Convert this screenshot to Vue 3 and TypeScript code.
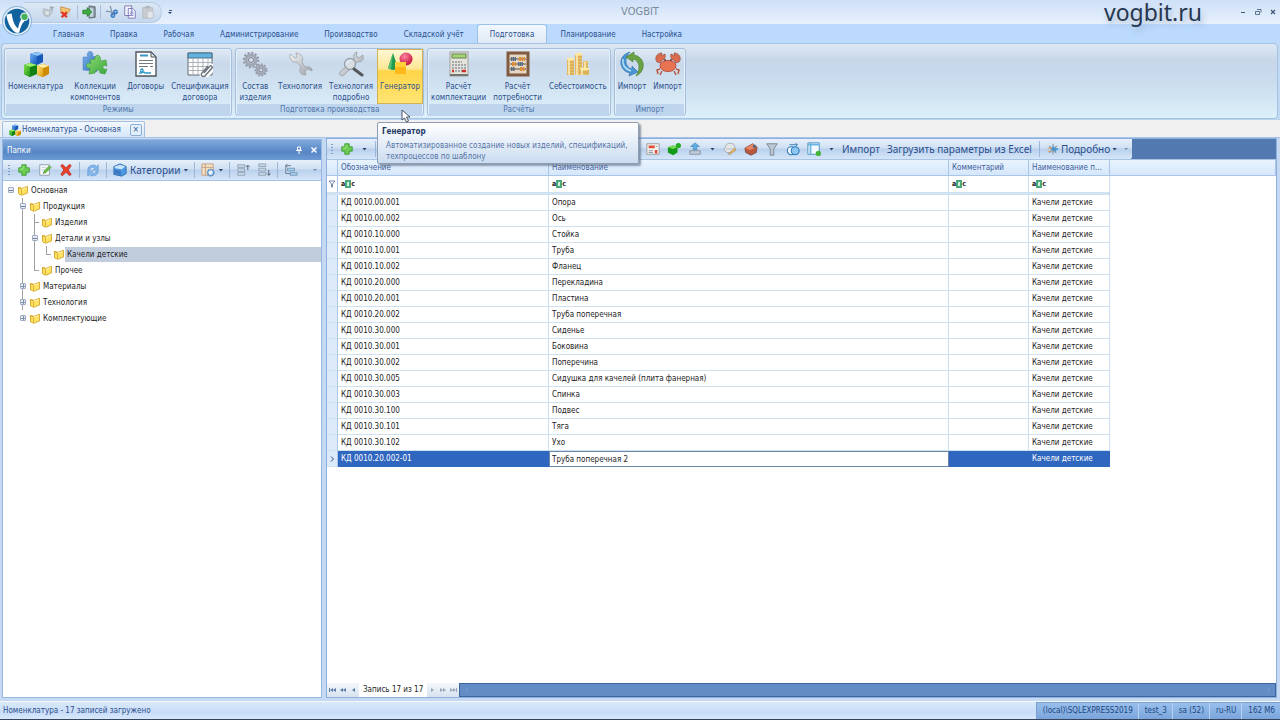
<script setup lang="ts">
import { ref } from 'vue'

interface RibbonItem { icon: string; lines: string[]; active?: boolean }
interface RibbonGroup { title: string; items: RibbonItem[] }
interface TreeRow { label: string; guides: string[]; selected?: boolean }

const menu = ['Главная', 'Правка', 'Рабочая', 'Администрирование', 'Производство', 'Складской учёт', 'Подготовка', 'Планирование', 'Настройка']
const activeMenu = ref('Подготовка')

const quick = ['q-redo', 'q-flag', '|', 'q-exit', '|', 'q-cut', 'q-copy', 'q-paste']

const groups: RibbonGroup[] = [
  {
    title: 'Режимы',
    items: [
      { icon: 'cubes', lines: ['Номенклатура'] },
      { icon: 'puzzle', lines: ['Коллекции', 'компонентов'] },
      { icon: 'contract', lines: ['Договоры'] },
      { icon: 'spec', lines: ['Спецификация', 'договора'] },
    ],
  },
  {
    title: 'Подготовка производства',
    items: [
      { icon: 'gears', lines: ['Состав', 'изделия'] },
      { icon: 'wrench', lines: ['Технология'] },
      { icon: 'tools', lines: ['Технология', 'подробно'] },
      { icon: 'shapes', lines: ['Генератор'], active: true },
    ],
  },
  {
    title: 'Расчёты',
    items: [
      { icon: 'calc', lines: ['Расчёт', 'комплектации'] },
      { icon: 'abacus', lines: ['Расчёт', 'потребности'] },
      { icon: 'coins', lines: ['Себестоимость'] },
    ],
  },
  {
    title: 'Импорт',
    items: [
      { icon: 'sync', lines: ['Импорт'] },
      { icon: 'crab', lines: ['Импорт'] },
    ],
  },
]

const tree: TreeRow[] = [
  { label: 'Основная', guides: ['minus root'] },
  { label: 'Продукция', guides: ['none', 'minus line'] },
  { label: 'Изделия', guides: ['none', 'pipe', 'tee'] },
  { label: 'Детали и узлы', guides: ['none', 'pipe', 'minus line'] },
  { label: 'Качели детские', guides: ['none', 'pipe', 'pipe', 'elbow'], selected: true },
  { label: 'Прочее', guides: ['none', 'pipe', 'elbow'] },
  { label: 'Материалы', guides: ['none', 'plus line'] },
  { label: 'Технология', guides: ['none', 'plus line'] },
  { label: 'Комплектующие', guides: ['none', 'plus root'] },
]

const rows: [string, string][] = [
  ['КД 0010.00.001', 'Опора'],
  ['КД 0010.00.002', 'Ось'],
  ['КД 0010.10.000', 'Стойка'],
  ['КД 0010.10.001', 'Труба'],
  ['КД 0010.10.002', 'Фланец'],
  ['КД 0010.20.000', 'Перекладина'],
  ['КД 0010.20.001', 'Пластина'],
  ['КД 0010.20.002', 'Труба поперечная'],
  ['КД 0010.30.000', 'Сиденье'],
  ['КД 0010.30.001', 'Боковина'],
  ['КД 0010.30.002', 'Поперечина'],
  ['КД 0010.30.005', 'Сидушка для качелей (плита фанерная)'],
  ['КД 0010.30.003', 'Спинка'],
  ['КД 0010.30.100', 'Подвес'],
  ['КД 0010.30.101', 'Тяга'],
  ['КД 0010.30.102', 'Ухо'],
]
const edited = ref('Труба поперечная 2')
const headers = ['Обозначение', 'Наименование', 'Комментарий', 'Наименование п...']
const status = ['(local)\\SQLEXPRESS2019', 'test_3', 'sa (52)', 'ru-RU', '162 Мб']
</script>

<template>
  <div class="app">
    <svg class="defs" aria-hidden="true">
      <defs>
        <linearGradient id="gBlue" x1="0" y1="0" x2="1" y2="1"><stop offset="0" stop-color="#6db0f5" /><stop offset="1" stop-color="#1453b8" /></linearGradient>
        <linearGradient id="gPuz" x1="0" y1="0" x2="1" y2="1"><stop offset="0" stop-color="#7fb4ea" /><stop offset="1" stop-color="#2f6dbf" /></linearGradient>
        <linearGradient id="gGreen" x1="0" y1="0" x2="1" y2="1"><stop offset="0" stop-color="#7ae04c" /><stop offset="1" stop-color="#1d9416" /></linearGradient>
        <linearGradient id="gLeaf" x1="0" y1="0" x2="1" y2="1"><stop offset="0" stop-color="#8fdc78" /><stop offset="1" stop-color="#3ba53a" /></linearGradient>
        <linearGradient id="gGold" x1="0" y1="0" x2="1" y2="1"><stop offset="0" stop-color="#ffe27a" /><stop offset="1" stop-color="#dd9c08" /></linearGradient>
        <linearGradient id="gGray" x1="0" y1="0" x2="1" y2="1"><stop offset="0" stop-color="#f4f5f6" /><stop offset="1" stop-color="#9aa0a8" /></linearGradient>
        <radialGradient id="gRed" cx="0.4" cy="0.3" r="0.7"><stop offset="0" stop-color="#ff86a0" /><stop offset="1" stop-color="#c5123f" /></radialGradient>

        <symbol id="cubes" viewBox="0 0 26 26">
          <path d="M7 3l7-2 6 2v8l-6 3-7-2z" fill="#1757b5" /><path d="M7 3l7-2 6 2-6 2z" fill="#8cc4fa" /><path d="M7 3l7 2v9l-7-2z" fill="url(#gBlue)" />
          <path d="M1 14l6-2 7 2v9l-7 3-6-3z" fill="#128012" /><path d="M1 14l6-2 7 2-7 2z" fill="#9df06c" /><path d="M1 14l6 2v10l-6-3z" fill="url(#gGreen)" />
          <path d="M14 15l6-2 6 2v8l-6 3-6-2z" fill="#cf8b02" /><path d="M14 15l6-2 6 2-6 2z" fill="#fff0a0" /><path d="M14 15l6 2v9l-6-2z" fill="url(#gGold)" />
        </symbol>
        <symbol id="puzzle" viewBox="0 0 26 26">
          <path d="M1 6l5 0c-2-3 0-5.500 2-5.500s4 2 2.500 5l4.500 0v15L1 19z" fill="url(#gPuz)" stroke="#4a7fc4" stroke-width=".5" />
          <path d="M8 9l5-1c-1-4 4-5 5-2 1 2 0 3 1 4l5-1 1 6c-3-1-5 0-4 2s3 1 4 1l-2 5-5-1c0-4-5-4-5 0l-6 1 1-6c-3 1-5-3-2-5 1 0 2 0 3 1z" fill="url(#gLeaf)" stroke="#3c9c35" stroke-width=".6" />
        </symbol>
        <symbol id="contract" viewBox="0 0 26 26">
          <path d="M3 1h15l5 5v19H3z" fill="#fff" stroke="#4f565d" stroke-width="1.4" /><path d="M18 1v5h5z" fill="#d5dce3" stroke="#4f565d" />
          <path d="M7 4.500h8" stroke="#3993c8" stroke-width="2" /><path d="M6 9.500h14M6 12.500h14M6 15.500h9M17 15.500h3" stroke="#737a80" stroke-width="1" />
          <path d="M6 22c4 1 5-4 3-4s-2 5 2 3l1 1h6" stroke="#2998c7" stroke-width="1.300" fill="none" />
        </symbol>
        <symbol id="spec" viewBox="0 0 26 26">
          <path d="M1 2h24v22H1z" fill="#fff" stroke="#5f6870" /><path d="M1 2h24v5H1z" fill="#62b3df" stroke="#4c7184" /><path d="M1 11.500h24M1 15.500h24M1 19.500h24M6 7v17M11 7v17M16 7v17M21 7v17" stroke="#aab2b8" />
          <path d="M16 24l8-9c2-2 5 1 3 3l-8 8c-3 3-6-1-4-3l8-8" fill="none" stroke="#fff" stroke-width="3" /><path d="M17 22l6-7c1-1 3 1 2 2l-7 8c-2 2-5-1-3-3l6-7" fill="none" stroke="#697078" stroke-width="1.300" />
        </symbol>
        <symbol id="gears" viewBox="0 0 26 26">
          <circle cx="9" cy="9" r="7" fill="none" stroke="#9297a6" stroke-width="2.500" stroke-dasharray="2 1.670" /><circle cx="9" cy="9" r="5" fill="#c6cad4" stroke="#a1a6b4" stroke-width="3" /><circle cx="9" cy="9" r="2.500" fill="#d7e0ea" stroke="#7c8291" />
          <circle cx="19" cy="19" r="5.500" fill="none" stroke="#9297a6" stroke-width="2" stroke-dasharray="1.800 1.340" /><circle cx="19" cy="19" r="4" fill="#c6cad4" stroke="#a1a6b4" stroke-width="2.500" /><circle cx="19" cy="19" r="2" fill="#d7e0ea" stroke="#7c8291" />
        </symbol>
        <symbol id="wrench" viewBox="0 0 26 26">
          <path d="M3 3l5 4 2-1-1-4c6 1 8 5 6 9l3 5c4-1 8 1 7 4l-4-2-3 2 1 4c-6 0-8-4-5-8l-4-5C5 12 2 8 3 3z" fill="url(#gGray)" stroke="#999da3" stroke-width=".7" />
        </symbol>
        <symbol id="tools" viewBox="0 0 26 26">
          <path d="M19 1l-1 4 3 2 4-3c1 5-1 7-6 7L7 23c-3 4-8 0-4-3L16 9c-1-5 0-7 3-8z" fill="url(#gGray)" stroke="#8f9499" stroke-width=".7" />
          <circle cx="12" cy="13" r="5.500" fill="#e9eff4" fill-opacity=".6" stroke="#969ca2" stroke-width="1.300" /><path d="M16 18l8 6" stroke="#55595e" stroke-width="3" stroke-linecap="round" />
        </symbol>
        <symbol id="shapes" viewBox="0 0 26 26">
          <path d="M6 2l5 15c-3 3-8 2-10 0z" fill="#229a4f" /><path d="M6 2L4 18l-3-1z" fill="#57c176" /><circle cx="19" cy="8" r="6.500" fill="url(#gRed)" /><path d="M8 11h11v12H8z" fill="#ffb81a" /><path d="M8 11h11v5H8z" fill="#ffd03a" />
        </symbol>
        <symbol id="calc" viewBox="0 0 26 26">
          <rect x="4" y="1" width="18" height="24" fill="#e5e4dc" stroke="#a0a19b" /><rect x="6" y="3" width="14" height="4" fill="#a5d373" stroke="#668457" /><path d="M4 24h18" stroke="#74776f" stroke-width="2" />
          <path d="M6 11h10M6 14h14M6 17h14M6 20h14" stroke="#8c9499" stroke-width="1.700" stroke-dasharray="2 1" /><path d="M16 20h4M6 20h2" stroke="#cf2c2c" stroke-width="2.500" />
        </symbol>
        <symbol id="abacus" viewBox="0 0 26 26">
          <rect x="3" y="2" width="20" height="22" fill="#e6d7c3" stroke="#805a41" stroke-width="3" /><path d="M5 8h16M5 13h16M5 18h16" stroke="#5b4b42" />
          <path d="M6 8h5M13 13h5M6 18h4" stroke="#526984" stroke-width="4" stroke-dasharray="1.500 .5" /><path d="M14 8h6M7 13h4M15 18h5" stroke="#df8e36" stroke-width="4" stroke-dasharray="2 .5" />
        </symbol>
        <symbol id="coins" viewBox="0 0 26 26">
          <path d="M2 8h7v16H2zM10 3h7v21h-7zM18 10h5v8h-5zM15 18h9v6h-9z" fill="#e9c36c" /><path d="M2 11h7M2 14h7M2 17h7M2 20h7M2 23h7M10 6h7M10 9h7M10 12h7M10 15h7M10 18h5M10 21h5M18 13h5M18 16h5M15 20h9M15 22h9" stroke="#c7953f" stroke-width=".8" />
          <path d="M4 9v15M12 4v20M17 19v5M20 11v6" stroke="#ffeebb" stroke-width="1.500" /><ellipse cx="5.500" cy="8" rx="3.500" ry="1.500" fill="#ffe9a6" /><ellipse cx="13.500" cy="3" rx="3.500" ry="1.500" fill="#ffe9a6" /><ellipse cx="19.500" cy="18" rx="4.500" ry="1.500" fill="#ffe9a6" />
        </symbol>
        <symbol id="sync" viewBox="0 0 26 26">
          <path d="M11 1C4 3 1 8 2 13c1 5 4 8 9 9l-1 3 9-4-6-6v3c-4-1-6-4-6-8 0-3 1-6 4-9z" fill="#4a94d2" stroke="#2b6ba8" stroke-width=".6" /><path d="M4 8C3 14 6 18 12 20" stroke="#b5e2f8" stroke-width="1.500" fill="none" />
          <path d="M17 25c6-3 8-8 7-13-1-4-4-7-9-8V1L7 6l7 5V8c4 1 6 4 6 8 0 3-1 6-3 9z" fill="#69a346" stroke="#3f7928" stroke-width=".6" />
        </symbol>
        <symbol id="crab" viewBox="0 0 26 26">
          <path d="M6 12L2 11c-3-4 0-9 5-9L6 5l4-2c1 4-1 6-4 7zM20 12l4-1c3-4 0-9-5-9l1 3-4-2c-1 4 1 6 4 7z" fill="#dd6b4e" stroke="#9e5647" stroke-width=".8" /><path d="M5 18l-3 1 1 4M7 20l-2 4M21 18l3 1-1 4M19 20l2 4" fill="none" stroke="#b85641" stroke-width="1.500" />
          <ellipse cx="13" cy="15" rx="8" ry="5.500" fill="#e77353" stroke="#b95340" /><circle cx="10" cy="9" r="1" fill="#673b36" /><circle cx="16" cy="9" r="1" fill="#673b36" />
        </symbol>
        <symbol id="logo" viewBox="0 0 28 28">
          <circle cx="14" cy="14" r="13.500" fill="#e5f0fa" stroke="#8eb4d8" /><circle cx="14" cy="14" r="11.500" fill="#1163a0" />
          <path d="M4 8l5-1c1 7 3 12 6 14 1-5 2-8 4-9l2 2c-3 3-4 7-5 11h-3C8 22 5 15 4 8z" fill="#fff" /><circle cx="21" cy="10" r="4" fill="#fff" /><circle cx="21" cy="10" r="3" fill="#47b25e" />
        </symbol>

        <symbol id="q-redo" viewBox="0 0 16 16"><path d="M3 4l6 2 4-3v5l-4 5H5L2 9z" fill="#c9cfd6" stroke="#b0b8c1" /><circle cx="7" cy="9" r="3" fill="#dfe4e9" stroke="#a9b2bb" /><path d="M10 3h5M12 1v5" stroke="#a4adb7" stroke-width="1.500" /></symbol>
        <symbol id="q-flag" viewBox="0 0 16 16"><path d="M2 2l11 3-4 6-7-2z" fill="#f2c470" stroke="#c48c4e" /><path d="M3 8l6 6M9 8l-6 6" stroke="#e13223" stroke-width="2.500" /><path d="M10 8l4 3-4 3z" fill="#c9d5e0" /></symbol>
        <symbol id="q-exit" viewBox="0 0 16 16"><path d="M8 1l7 1v12l-7 1z" fill="#8a98a3" stroke="#58666f" /><path d="M9 3l4 1v9l-4 1z" fill="#c1d5dc" /><path d="M1 6h5V3l5 5-5 5v-3H1z" fill="#3dad3d" stroke="#257e2b" /></symbol>
        <symbol id="q-cut" viewBox="0 0 16 16"><path d="M6 1l3 12M1 7l13 2" stroke="#8395aa" stroke-width="1.500" /><circle cx="9" cy="12" r="2" fill="none" stroke="#3477c6" stroke-width="1.500" /><circle cx="12" cy="8" r="2" fill="none" stroke="#3477c6" stroke-width="1.500" /></symbol>
        <symbol id="q-copy" viewBox="0 0 16 16"><path d="M2 1h8v11H2zM6 4h5l3 3v8H6z" fill="#f5f5ff" stroke="#7071b4" /><path d="M8 8h4M8 10h4M8 12h4" stroke="#8f90c8" /></symbol>
        <symbol id="q-paste" viewBox="0 0 16 16"><path d="M2 3h11v12H2z" fill="#c8cdd2" stroke="#b2b8bf" /><path d="M5 1h5v3H5z" fill="#b0b6bd" /><path d="M7 7h7v8H7z" fill="#e3e6e9" stroke="#bcc1c7" /></symbol>

        <symbol id="plus" viewBox="0 0 16 16"><path d="M5.500 2h5v3.500H14v5h-3.500V14h-5v-3.500H2v-5h3.500z" fill="#6ccb52" stroke="#3b9c33" stroke-width="1" /><path d="M7 3.500v3.500H3.500" stroke="#a7ec8c" fill="none" /></symbol>
        <symbol id="edit" viewBox="0 0 16 16"><path d="M2 2h11v12H2z" fill="#f8fafc" stroke="#8c99a8" /><path d="M4 5h5M4 8h4" stroke="#bdc8d2" /><path d="M6 12l1-3 6-6 2 2-6 6z" fill="#71c24c" stroke="#438b34" stroke-width=".7" /></symbol>
        <symbol id="del" viewBox="0 0 16 16"><path d="M2 3l2-1.500 4 4 4-4L14 3l-3.500 5 3.500 5-2 1.500-4-4-4 4L2 13l3.500-5z" fill="#e93f2c" stroke="#b92a1c" stroke-width=".8" /></symbol>
        <symbol id="refresh" viewBox="0 0 16 16"><path d="M2 8c0-6 8-7 10-4l2-2v6H8l2-2C8 4 5 5 4 8zM14 9c0 6-8 7-10 4l-2 2V9h6l-2 2c2 2 5 1 6-2z" fill="#86b8ee" stroke="#5b94d4" stroke-width=".7" /></symbol>
        <symbol id="box" viewBox="0 0 16 16"><path d="M1 4l7-3 7 3v8l-5 3-9-2z" fill="#4b9ae5" stroke="#2d68ad" /><path d="M2 4l6-2 6 2-4 3-8-1z" fill="#cbe6fb" /><path d="M2 7l7 2v5l-7-2z" fill="#3f78c0" /></symbol>
        <symbol id="gridgear" viewBox="0 0 16 16"><path d="M1 1h13v13H1zM1 5h13M5 1v13" fill="#f5dfc3" stroke="#bc9c83" /><circle cx="11" cy="11" r="3.500" fill="#e8f3fb" stroke="#518bc6" stroke-width="2" stroke-dasharray="2 .5" /></symbol>
        <symbol id="expand" viewBox="0 0 16 16"><path d="M2 2h8v3H2zM2 6.500h8v3H2zM2 11h8v3H2z" fill="#c6dced" stroke="#8090a0" stroke-width=".8" /><path d="M13.500 8V3M11.500 4.500l2-2 2 2" fill="none" stroke="#4c5969" /></symbol>
        <symbol id="collapse" viewBox="0 0 16 16"><path d="M2 1h8v3H2zM2 6h8v3H2zM2 11h8v3H2z" fill="#c6dced" stroke="#8090a0" stroke-width=".8" /><path d="M13.500 8v6M11.500 12l2 2 2-2" fill="none" stroke="#4c5969" /></symbol>
        <symbol id="branch" viewBox="0 0 16 16"><path d="M4 6h8v3H4zM7 11h8v3H7z" fill="#a4d0f0" stroke="#6688a8" stroke-width=".8" /><path d="M2 3h6M4 1L2 3l2 2M2 3v9h5" fill="none" stroke="#66768a" /></symbol>
        <symbol id="folder" viewBox="0 0 16 16"><path d="M1 5l4-1 1 9-3 1z" fill="#d8a51c" /><path d="M2 5l4 1 8-3v9l-8 3-4-2z" fill="#ffe060" stroke="#c99a1c" /><path d="M6 7v7" stroke="#d0a52a" /><path d="M7 7l6-2" stroke="#fff5a5" stroke-width="1.500" /></symbol>
        <symbol id="t-form" viewBox="0 0 16 16"><path d="M1 2h14v12H1z" fill="#f4f4f2" stroke="#969799" /><path d="M3 4h7v3H3zM10 9h3v4h-3z" fill="#df5038" /><path d="M3 10h5M3 12h5M11 5h2" stroke="#858e97" /></symbol>
        <symbol id="t-cube" viewBox="0 0 16 16"><path d="M1 6l6-2 5 2v6l-5 3-6-3z" fill="#139a19" /><path d="M1 6l6-2 5 2-5 2z" fill="#77dc51" /><circle cx="13" cy="4" r="3" fill="#24ac23" /></symbol>
        <symbol id="t-up" viewBox="0 0 16 16"><path d="M6 9V5H3l5-4 5 4h-3v4z" fill="#60ade2" stroke="#3479b5" stroke-width=".7" /><path d="M2 10h12v4H2z" fill="#c0cbd6" stroke="#8291a1" /></symbol>
        <symbol id="t-brush" viewBox="0 0 16 16"><path d="M3 5c0-4 9-5 10-1l1 4-5 4H4L1 9z" fill="#e4e5e7" stroke="#a1a7ae" /><path d="M3 8h9" stroke="#b4b9bf" /><path d="M6 14l7-7 2 2-7 5z" fill="#e6b967" stroke="#a98248" stroke-width=".7" /></symbol>
        <symbol id="t-brick" viewBox="0 0 16 16"><path d="M1 7l9-5 5 4-1 6-6 3-6-3z" fill="#b9573d" stroke="#7d4a40" /><path d="M1 7l9-5 5 4-8 3z" fill="#e58563" /><circle cx="12" cy="5" r="2" fill="#5a6975" /></symbol>
        <symbol id="t-funnel" viewBox="0 0 16 16"><path d="M2 2h12l-4 6v7H6V8z" fill="#bdc7d3" stroke="#738294" /></symbol>
        <symbol id="t-circles" viewBox="0 0 16 16"><circle cx="6" cy="10" r="4.500" fill="#f1f8ff" stroke="#2a79bc" stroke-width="1.200" /><circle cx="10.500" cy="10" r="4.500" fill="#8cc6ef" stroke="#2a79bc" stroke-width="1.200" /><path d="M4 3h9M11 1l2 2-2 2" stroke="#367bb5" fill="none" /></symbol>
        <symbol id="t-table" viewBox="0 0 16 16"><path d="M1 1h13v13H1z" fill="#f3faff" stroke="#438dbc" /><path d="M1 3h13M4 1v13" stroke="#6bb6df" stroke-width="2" /><circle cx="13" cy="13" r="3" fill="#45b53a" /></symbol>
        <symbol id="t-detail" viewBox="0 0 16 16"><path d="M8 1v14M3 4l9 9M13 4L3 13" stroke="#8796a5" stroke-width="1.500" /><path d="M5 8h10M8 5l4 6" stroke="#3f93d0" stroke-width="2" /><path d="M1 7h5M1 11h4" stroke="#df9b4a" stroke-width="1.500" /></symbol>
      </defs>
    </svg>

    <header class="title">
      <svg class="logo"><use href="#logo" /></svg>
      <div class="quick">
        <template v-for="(q, i) in quick" :key="i">
          <i v-if="q === '|'" class="qsep"></i>
          <button v-else class="plain" :aria-label="q"><svg class="ic14"><use :href="'#' + q" /></svg></button>
        </template>
      </div>
      <button class="plain more" aria-label="Настроить панель"><i class="more-line"></i><i class="caret"></i></button>
      <h1>VOGBIT</h1>
      <span class="brand">vogbit.ru</span>
      <div class="win">
        <button class="plain" aria-label="Свернуть"><svg class="ic8" viewBox="0 0 8 8"><path d="M2 4.500h4" stroke="#3f5874" /></svg></button>
        <button class="plain" aria-label="Восстановить"><svg class="ic8" viewBox="0 0 8 8"><path d="M1.500 3.500h4v3h-4zM3 1.500h4v3" fill="none" stroke="#3f5874" stroke-width=".8" /></svg></button>
        <button class="plain" aria-label="Закрыть"><svg class="ic8" viewBox="0 0 8 8"><path d="M2 2l4 4M6 2L2 6" stroke="#3f5874" stroke-width="1.200" /></svg></button>
      </div>
    </header>

    <nav class="menu">
      <button v-for="m in menu" :key="m" :class="{ on: m === activeMenu }" @click="activeMenu = m">{{ m }}</button>
    </nav>

    <section class="ribbon">
      <div v-for="g in groups" :key="g.title" class="group">
        <div class="items">
          <div v-for="(it, i) in g.items" :key="i" class="cell">
            <button class="rbtn" :class="{ hot: it.active }">
              <svg class="ic26"><use :href="'#' + it.icon" /></svg>
              <span v-for="l in it.lines" :key="l">{{ l }}</span>
            </button>
            <template v-if="it.active">
              <div class="tip" role="tooltip">
                <b>Генератор</b>
                <p>Автоматизированное создание новых изделий, спецификаций, техпроцессов по шаблону</p>
              </div>
              <svg class="pointer" viewBox="0 0 10 14"><path d="M1 1v10l2.500-2 2 4 2-1-2-4H9z" fill="#fff" stroke="#3c4654" stroke-width=".9" /></svg>
            </template>
          </div>
        </div>
        <div class="caption">{{ g.title }}</div>
      </div>
    </section>

    <div class="doctabs">
      <div class="doctab">
        <svg class="ic12"><use href="#cubes" /></svg>
        <span>Номенклатура - Основная</span>
        <button aria-label="Закрыть вкладку">×</button>
      </div>
    </div>

    <main class="work">
      <aside class="side">
        <div class="side-head">
          <span>Папки</span>
          <button class="plain" aria-label="Закрепить"><svg class="ic8" viewBox="0 0 8 8"><path d="M2.500 1h3v3h-3zM1 4.500h6M4 4.500V8" fill="none" stroke="#fff" /></svg></button>
          <button class="plain" aria-label="Закрыть"><svg class="ic8" viewBox="0 0 8 8"><path d="M1.500 1.500l5 5M6.500 1.500l-5 5" stroke="#fff" stroke-width="1.500" /></svg></button>
        </div>
        <div class="bar side-bar">
          <i class="grip"></i>
          <button class="plain" aria-label="Добавить"><svg class="ic14"><use href="#plus" /></svg></button>
          <button class="plain" aria-label="Изменить"><svg class="ic14"><use href="#edit" /></svg></button>
          <button class="plain" aria-label="Удалить"><svg class="ic14"><use href="#del" /></svg></button>
          <i class="sep"></i>
          <button class="plain" aria-label="Обновить"><svg class="ic14"><use href="#refresh" /></svg></button>
          <i class="sep"></i>
          <button class="plain wide"><svg class="ic14"><use href="#box" /></svg><span>Категории</span><i class="caret"></i></button>
          <i class="sep"></i>
          <button class="plain wide" aria-label="Вид"><svg class="ic14"><use href="#gridgear" /></svg><i class="caret"></i></button>
          <i class="sep"></i>
          <button class="plain" aria-label="Развернуть"><svg class="ic14"><use href="#expand" /></svg></button>
          <button class="plain" aria-label="Свернуть"><svg class="ic14"><use href="#collapse" /></svg></button>
          <i class="sep"></i>
          <button class="plain" aria-label="Ветвь"><svg class="ic14"><use href="#branch" /></svg></button>
          <i class="caret small end"></i>
        </div>
        <ul class="tree">
          <li v-for="t in tree" :key="t.label">
            <i v-for="(g, i) in t.guides" :key="i" class="guide" :class="g"></i>
            <svg class="ic12"><use href="#folder" /></svg>
            <span class="node" :class="{ sel: t.selected }">{{ t.label }}</span>
          </li>
        </ul>
      </aside>

      <section class="content">
        <div class="strip">
          <div class="bar main-bar">
            <i class="grip"></i>
            <button class="plain" aria-label="Добавить запись"><svg class="ic14"><use href="#plus" /></svg></button>
            <i class="caret"></i>
            <i class="sep"></i>
            <i class="under-tip"></i>
            <button class="plain" aria-label="Форма"><svg class="ic14"><use href="#t-form" /></svg></button>
            <button class="plain" aria-label="Компонент"><svg class="ic14"><use href="#t-cube" /></svg></button>
            <button class="plain" aria-label="Выгрузить"><svg class="ic14"><use href="#t-up" /></svg></button>
            <i class="caret"></i>
            <button class="plain" aria-label="Очистить"><svg class="ic14"><use href="#t-brush" /></svg></button>
            <button class="plain" aria-label="Материал"><svg class="ic14"><use href="#t-brick" /></svg></button>
            <button class="plain" aria-label="Фильтр"><svg class="ic14"><use href="#t-funnel" /></svg></button>
            <button class="plain" aria-label="Замена"><svg class="ic14"><use href="#t-circles" /></svg></button>
            <button class="plain" aria-label="Таблица"><svg class="ic14"><use href="#t-table" /></svg></button>
            <i class="caret"></i>
            <button class="plain txt">Импорт</button>
            <button class="plain txt">Загрузить параметры из Excel</button>
            <i class="sep"></i>
            <button class="plain wide"><svg class="ic12"><use href="#t-detail" /></svg><span>Подробно</span><i class="caret"></i></button>
            <i class="caret small"></i>
          </div>
        </div>

        <div class="grid-wrap">
          <table>
            <colgroup><col class="c0" /><col class="c1" /><col class="c2" /><col class="c3" /><col class="c4" /><col /></colgroup>
            <thead>
              <tr><th></th><th v-for="h in headers" :key="h">{{ h }}</th><th></th></tr>
            </thead>
            <tbody>
              <tr class="filter">
                <td><svg class="ic8" viewBox="0 0 8 8"><path d="M1 1h6L4.500 4v3h-1V4z" fill="none" stroke="#536f96" stroke-width=".8" /></svg></td>
                <td v-for="h in headers" :key="h"><span class="abc">a<i></i>c</span></td>
                <td class="void"></td>
              </tr>
              <tr class="gap"><td colspan="5"></td><td class="void"></td></tr>
              <tr v-for="r in rows" :key="r[0]">
                <td class="ind"></td><td>{{ r[0] }}</td><td>{{ r[1] }}</td><td></td><td>Качели детские</td><td class="void"></td>
              </tr>
              <tr class="current">
                <td class="ind"><svg class="ic8" viewBox="0 0 8 8"><path d="M3 1.500L5.500 4 3 6.500" fill="none" stroke="#2c4f86" /></svg></td>
                <td>КД 0010.20.002-01</td>
                <td class="edit"><input v-model="edited" aria-label="Наименование" /></td>
                <td></td><td>Качели детские</td><td class="void"></td>
              </tr>
            </tbody>
          </table>
        </div>

        <div class="navig">
          <div class="nbtns">
            <button class="plain" aria-label="Первая"><svg class="ic8" viewBox="0 0 8 8"><path d="M0 2h1v4H0zM4 2v4L1 4zM7 2v4L4 4z" fill="#5b7ba8" /></svg></button>
            <button class="plain" aria-label="Предыдущая страница"><svg class="ic8" viewBox="0 0 8 8"><path d="M4 2v4L1 4zM7 2v4L4 4z" fill="#5b7ba8" /></svg></button>
            <button class="plain" aria-label="Предыдущая"><svg class="ic8" viewBox="0 0 8 8"><path d="M6 2v4L3 4z" fill="#5b7ba8" /></svg></button>
          </div>
          <span>Запись 17 из 17</span>
          <div class="nbtns">
            <button class="plain" aria-label="Следующая"><svg class="ic8" viewBox="0 0 8 8"><path d="M2 2v4l3-2z" fill="#97a6ba" /></svg></button>
            <button class="plain" aria-label="Следующая страница"><svg class="ic8" viewBox="0 0 8 8"><path d="M1 2v4l3-2zM4 2v4l3-2z" fill="#97a6ba" /></svg></button>
            <button class="plain" aria-label="Последняя"><svg class="ic8" viewBox="0 0 8 8"><path d="M1 2v4l3-2zM4 2v4l3-2zM7 2h1v4H7z" fill="#97a6ba" /></svg></button>
          </div>
          <div class="hscroll"><span>‹</span><span>›</span></div>
        </div>
      </section>
    </main>

    <footer class="status">
      <span class="msg">Номенклатура - 17 записей загружено</span>
      <div class="info"><span v-for="s in status" :key="s">{{ s }}</span></div>
    </footer>
  </div>
</template>

<style>
body { margin: 0; overflow: hidden; }
</style>

<style scoped>
.app { display: flex; flex-direction: column; height: 100vh; box-sizing: border-box; border-bottom: 1px solid #33445c; font: 8px/11px "DejaVu Sans Condensed", "DejaVu Sans", sans-serif; color: #2b4f8c; background: #c2d9f2; }
.app *, .app *::before, .app *::after { box-sizing: border-box; }
.defs { position: absolute; width: 0; height: 0; }
button, input { font: inherit; color: inherit; }
button { cursor: pointer; white-space: nowrap; }
.plain { border: 0; padding: 0; background: none; display: flex; align-items: center; justify-content: center; }
svg { flex: none; display: block; }
.ic8 { width: 8px; height: 8px; }
.ic12 { width: 12px; height: 12px; }
.ic14 { width: 14px; height: 14px; }
.ic26 { width: 26px; height: 26px; }
.caret { flex: none; width: 5px; height: 3px; background: #28466f; clip-path: polygon(0 0, 100% 0, 50% 100%); }
.caret.small { width: 4px; height: 2px; background: #7890b0; }

.title { flex: none; height: 24px; display: flex; align-items: center; position: relative; background: linear-gradient(#cee0f7, #e8f1fc); }
.logo { position: absolute; left: 2px; top: 6px; width: 30px; height: 30px; z-index: 3; }
.quick { margin-left: 24px; width: 138px; height: 21px; padding-left: 17px; display: flex; align-items: center; gap: 4px; border: 1px solid #b5cbe4; border-left: 0; border-radius: 0 11px 11px 0; background: linear-gradient(#dce8f5, #c5d8ee); }
.qsep { width: 1px; height: 14px; background: #a8bfda; }
.more { flex-direction: column; gap: 1px; margin-left: 6px; }
.more-line { width: 3px; height: 1px; background: #3f5874; }
.more .caret { width: 4px; height: 2px; }
h1 { margin: 0; position: absolute; left: 0; right: 0; text-align: center; font: 11px/24px "DejaVu Sans Condensed", sans-serif; color: #7a889a; pointer-events: none; }
.brand { margin-left: auto; font: 23px/24px "Noto Sans", sans-serif; color: #26374f; text-shadow: 2px 4px 6px #9fb4d0; z-index: 2; }
.win { display: flex; gap: 7px; margin: 0 3px 0 37px; }

.menu { flex: none; height: 19px; display: flex; padding-left: 40px; background: #bbdafd; }
.menu button { border: 1px solid transparent; border-bottom: 0; background: none; padding: 0 12px; border-radius: 3px 3px 0 0; }
.menu .on { background: linear-gradient(#f2f8ff, #dfeaf6); border-color: #9cbfe6; }

.ribbon { flex: none; height: 76px; margin: 0 2px 0 1px; padding: 4px 2px 2px; display: flex; gap: 3px; border: 1px solid #a3c2e5; border-radius: 4px; background: linear-gradient(#dde8f3, #c7d7e9 22%, #c9dbed 50%, #dcf0fa); }
.group { display: flex; flex-direction: column; border: 1px solid #a5c0de; border-radius: 3px; box-shadow: inset 0 0 0 1px #e4effa; background: linear-gradient(#dfe9f4, #c9d9eb 22%, #cfe0f0 50%, #def0fb); }
.items { flex: 1; display: flex; gap: 1px; }
.cell { position: relative; display: flex; }
.rbtn { display: flex; flex-direction: column; align-items: center; border: 1px solid transparent; background: none; padding: 1px 2px 0; height: 55px; }
.rbtn svg { margin-bottom: 4px; }
.rbtn.hot { border-color: #d5b355; background: linear-gradient(#fff8d5, #fee797 35%, #ffd548 40%, #ffe574); }
.caption { height: 12px; margin: 0 1px 1px; text-align: center; line-height: 12px; background: #bfd5ee; color: #4f75aa; }
.tip { position: absolute; z-index: 20; left: 0; top: 73px; width: 262px; height: 42px; padding: 3px 4px; border: 1px solid #8d9db2; border-radius: 2px; box-shadow: 2px 2px 2px #50607a99; background: linear-gradient(#fff, #cbdcf0); text-align: left; color: #1f3a66; }
.tip b { display: block; line-height: 11px; }
.tip p { margin: 3px 0 0 4px; line-height: 11px; color: #5474a6; }
.pointer { position: absolute; z-index: 21; left: 24px; top: 60px; width: 10px; height: 14px; }

.doctabs { flex: none; height: 18px; display: flex; align-items: flex-end; padding-left: 2px; background: #f0f0f0; border-top: 1px solid #bcd3ee; }
.doctab { height: 16px; display: flex; align-items: center; gap: 1px; padding: 0 2px 0 6px; border: 1px solid #a3c0e2; border-bottom: 0; border-radius: 2px 2px 0 0; background: linear-gradient(#f2f8ff, #d5e6f9); }
.doctab button { margin-left: 8px; width: 12px; height: 12px; padding: 0; line-height: 8px; border: 1px solid #8cadd6; border-radius: 2px; background: #e2eefb; }

.work { flex: 1; min-height: 0; display: flex; gap: 4px; padding: 0 3px 3px 2px; background: #c5daf2; border-top: 1px solid #a5c3e8; }
.side { width: 320px; flex: none; display: flex; flex-direction: column; margin-top: 1px; border: 1px solid #98b7df; background: #fff; }
.side-head { height: 20px; flex: none; display: flex; align-items: center; gap: 7px; padding: 0 3px 0 4px; color: #fff; background: linear-gradient(#7fa9dc, #5686c5 60%, #6d9ad4); }
.side-head span { flex: 1; }
.bar { display: flex; align-items: center; background: linear-gradient(#e6f0fb, #d0e0f3 45%, #b9d0ec 50%, #d5e6f9); font: 10px/16px "Noto Sans", sans-serif; }
.side-bar { height: 21px; flex: none; gap: 7px; padding: 0 4px 0 5px; border-bottom: 1px solid #a8c4e6; }
.side-bar .sep { margin: 0 -1px; }
.side-bar .wide { gap: 3px; }
.grip { width: 2px; height: 11px; flex: none; background: repeating-linear-gradient(#7e9cc4 0 1px, transparent 1px 3px); }
.sep { width: 1px; height: 16px; flex: none; background: #9ab6d9; }
.wide { gap: 2px; }
.end { margin-left: auto; }
.tree { list-style: none; margin: 0; padding: 1px 0 0 1px; color: #1c1c1c; }
.tree li { display: flex; align-items: center; height: 16px; }
.tree .ic12 { margin-left: 1px; }
.node { height: 15px; line-height: 15px; padding-left: 2px; flex: 1; }
.node.sel { background: #c1ccdd; }
.guide { position: relative; width: 12px; height: 16px; flex: none; }
.pipe::before, .line::before, .tee::before { content: ""; position: absolute; left: 6px; top: 0; bottom: 0; border-left: 1px solid #a0a0a0; }
.elbow::before { content: ""; position: absolute; left: 6px; top: 0; height: 8px; border-left: 1px solid #a0a0a0; }
.tee::after, .elbow::after { content: ""; position: absolute; left: 6px; top: 8px; width: 5px; border-top: 1px solid #a0a0a0; }
.minus::after, .plus::after { content: ""; position: absolute; left: 4px; top: 5px; width: 6px; height: 6px; border: 1px solid #9dabc2; border-radius: 1px; background: linear-gradient(#6d7d9a, #6d7d9a) center / 4px 1px no-repeat #e9eef6; }
.plus::after { background: linear-gradient(#8291ab, #8291ab) center / 4px 1px no-repeat, linear-gradient(#8291ab, #8291ab) center / 1px 4px no-repeat, #e9eef6; }

.content { flex: 1; min-width: 0; display: flex; flex-direction: column; border: 1px solid #8fb0dc; background: #fff; }
.strip { flex: none; height: 20px; display: flex; background: #5279b0; }
.main-bar { gap: 7px; padding: 0 4px; border-radius: 0 0 2px 0; }
.main-bar > .caret:not(.small) { margin: 0 1px; }
.under-tip { width: 256px; }
.grid-wrap { flex: 1; min-height: 0; overflow: hidden; border-top: 1px solid #a8c3e3; }
table { width: 100%; table-layout: fixed; border-collapse: separate; border-spacing: 0; color: #1c1c1c; }
.c0 { width: 11px; } .c1 { width: 211px; } .c2 { width: 400px; } .c3 { width: 80px; } .c4 { width: 81px; }
th { height: 16px; padding: 0 0 0 3px; text-align: left; font-weight: normal; color: #3e609a; background: linear-gradient(#e9f3fe, #d5e7fb); border-right: 1px solid #a9c6e8; border-bottom: 1px solid #a9c6e8; white-space: nowrap; overflow: hidden; }
td { height: 16px; padding: 0 0 0 3px; border-right: 1px solid #cddff0; border-bottom: 1px solid #cfe0ee; line-height: 11px; white-space: nowrap; overflow: hidden; }
td:first-child { padding-left: 1px; border-right-color: #a9c6e8; }
td.ind { background: #dceafa; }
td.void { border: 0; }
.filter td { height: 17px; }
.gap td { height: 2px; background: #d3e3f5; }
.gap td.void { background: none; }
.abc { display: flex; align-items: center; font-weight: bold; font-size: 7px; }
.abc i { width: 6px; height: 8px; border: 2px solid #4ba77c; background: #d3f1e0; }
.current td:not(.ind):not(.void):not(.edit) { background: #2f66bf; color: #fff; border-color: #2f66bf; }
.current .edit { padding: 0; border: 0; }
.edit input { display: block; width: 100%; height: 16px; padding: 0 0 0 2px; border: 1px solid #6a86a8; background: #fff; outline: 0; }

.navig { flex: none; height: 14px; display: flex; align-items: stretch; color: #1c1c1c; }
.nbtns { display: flex; align-items: center; gap: 2px; padding: 0 2px; background: linear-gradient(#f4f8fc, #d6e2ef); }
.navig > span { padding: 0 4px; line-height: 14px; }
.hscroll { flex: 1; display: flex; justify-content: space-between; padding: 0 5px; line-height: 11px; color: #86aee0; border: 1px solid #3c66a2; background: #628cc3; }

.status { flex: none; height: 18px; display: flex; align-items: center; padding-left: 3px; border-top: 1px solid #f3f8ff; background: linear-gradient(#d9e9f8, #c8dcf8 60%, #d8e8fb); }
.msg { flex: 1; }
.info { align-self: stretch; display: flex; align-items: center; gap: 1px; padding-left: 1px; border: 1px solid #7d9fca; border-width: 1px 0 0 1px; background: linear-gradient(#98bfec, #7ba5db); color: #1d4681; }
.info span { padding: 0 5px; line-height: 16px; border-right: 1px solid #b7d3f3; }
.info span:last-child { border: 0; }
</style>
